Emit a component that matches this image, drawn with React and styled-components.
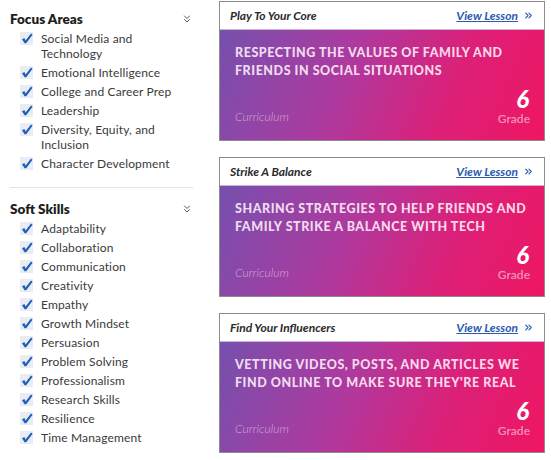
import React from "react";
import styled, { createGlobalStyle } from "styled-components";
import { ChevronsDown, ChevronsRight } from "lucide-react";

const GlobalStyle = createGlobalStyle`
  body {
    margin: 0;
    background: #ffffff;
    font-family: Lato, "Open Sans", sans-serif;
  }
`;

const Page = styled.div`
  display: flex;
  width: 551px;
  height: 460px;
  overflow: hidden;
`;

/* sidebar with filter groups */
const Sidebar = styled.aside`
  width: 183px;
  padding: 10px 0 0 10px;
  flex-shrink: 0;
`;

const Group = styled.section`
  padding-bottom: ${(p) => (p.divided ? "12px" : "0")};
  margin-bottom: ${(p) => (p.divided ? "12px" : "0")};
  border-bottom: ${(p) => (p.divided ? "1px solid #e3e3e3" : "none")};
`;

const GroupHead = styled.div`
  display: flex;
  justify-content: space-between;
  align-items: center;
  height: 18px;
  margin-bottom: 3px;
  color: #555;
`;

const GroupTitle = styled.h3`
  margin: 0;
  font-size: 13.5px;
  font-weight: 800;
  color: #1f1f1f;
`;

const Items = styled.ul`
  list-style: none;
  margin: 0;
  padding: 0 0 0 10px;
`;

const Item = styled.li`
  display: flex;
  align-items: flex-start;
  gap: 8px;
  font-size: 12px;
  line-height: 15px;
  color: #3a3a3a;
  margin-bottom: 4px;
  letter-spacing: 0.15px;
`;

const Box = styled.span`
  width: 13px;
  height: 13px;
  margin-top: 1px;
  flex-shrink: 0;
  background: #e9edf3;
  display: flex;
  align-items: center;
  justify-content: center;
`;

const Label = styled.span`
  max-width: 138px;
`;

/* lesson cards */
const Cards = styled.main`
  display: flex;
  flex-direction: column;
  gap: 16px;
  padding: 1px 0 0 26px;
`;

const Card = styled.article`
  width: 324px;
  height: 138px;
  border: 1px solid #8c8c8c;
  display: flex;
  flex-direction: column;
`;

const CardHead = styled.header`
  height: 27px;
  flex-shrink: 0;
  display: flex;
  align-items: center;
  justify-content: space-between;
  padding: 0 10px;
  border-bottom: 1px solid #c9b4d6;
  font-style: italic;
  font-size: 12px;
  font-weight: 700;
`;

const CardName = styled.span`
  color: #2a2a2a;
`;

const ViewLink = styled.a`
  display: flex;
  align-items: center;
  gap: 5px;
  color: #2a5aae;
  text-decoration: none;
  span {
    text-decoration: underline;
  }
`;

const CardBody = styled.div`
  flex: 1;
  display: flex;
  flex-direction: column;
  justify-content: space-between;
  padding: 14px 14px 14px 15px;
  background: linear-gradient(112deg, #7650ae 0%, #ad3a9f 38%, #dc2078 70%, #ef1662 100%);
`;

const Topic = styled.h2`
  margin: 0;
  padding-right: 0;
  margin-right: -6px;
  font-size: 12.5px;
  line-height: 18px;
  font-weight: 900;
  letter-spacing: 0.55px;
  text-transform: uppercase;
  color: rgba(255, 240, 250, 0.9);
`;

const CardFoot = styled.div`
  display: flex;
  justify-content: space-between;
  align-items: flex-end;
`;

const Curriculum = styled.span`
  font-size: 12px;
  line-height: 14px;
  font-style: italic;
  font-weight: 300;
  color: rgba(255, 230, 245, 0.6);
  margin-bottom: 2px;
`;

const GradeBox = styled.div`
  display: flex;
  flex-direction: column;
  align-items: flex-end;
`;

const GradeNum = styled.span`
  font-size: 24px;
  line-height: 26px;
  font-weight: 900;
  font-style: italic;
  color: #ffffff;
  margin-right: 1px;
`;

const GradeLabel = styled.span`
  font-size: 12px;
  line-height: 14px;
  font-weight: 600;
  color: rgba(255, 225, 240, 0.6);
`;

const Check = () => (
  <svg width="12" height="11" viewBox="0 0 12 11">
    <path d="M1 6.2 L3.4 5 L4.6 7.4 L10 0.6 L11.6 1.8 L5.2 10.2 L3.6 10.2 Z" fill="#1f5fb8" />
  </svg>
);

const focusAreas = [
  "Social Media and Technology",
  "Emotional Intelligence",
  "College and Career Prep",
  "Leadership",
  "Diversity, Equity, and Inclusion",
  "Character Development",
];

const softSkills = [
  "Adaptability",
  "Collaboration",
  "Communication",
  "Creativity",
  "Empathy",
  "Growth Mindset",
  "Persuasion",
  "Problem Solving",
  "Professionalism",
  "Research Skills",
  "Resilience",
  "Time Management",
];

const lessons = [
  { name: "Play To Your Core", topic: "Respecting the values of family and friends in social situations" },
  { name: "Strike A Balance", topic: "Sharing strategies to help friends and family strike a balance with tech" },
  { name: "Find Your Influencers", topic: "Vetting videos, posts, and articles we find online to make sure they're real" },
];

const FilterGroup = ({ title, items, divided }) => (
  <Group divided={divided}>
    <GroupHead>
      <GroupTitle>{title}</GroupTitle>
      <ChevronsDown size={12} strokeWidth={2} />
    </GroupHead>
    <Items>
      {items.map((it) => (
        <Item key={it}>
          <Box>
            <Check />
          </Box>
          <Label>{it}</Label>
        </Item>
      ))}
    </Items>
  </Group>
);

const App = () => (
  <>
    <GlobalStyle />
    <Page>
      <Sidebar>
        <FilterGroup title="Focus Areas" items={focusAreas} divided />
        <FilterGroup title="Soft Skills" items={softSkills} />
      </Sidebar>
      <Cards>
        {lessons.map((l) => (
          <Card key={l.name}>
            <CardHead>
              <CardName>{l.name}</CardName>
              <ViewLink href="#">
                <span>View Lesson</span>
                <ChevronsRight size={11} strokeWidth={2.5} />
              </ViewLink>
            </CardHead>
            <CardBody>
              <Topic>{l.topic}</Topic>
              <CardFoot>
                <Curriculum>Curriculum</Curriculum>
                <GradeBox>
                  <GradeNum>6</GradeNum>
                  <GradeLabel>Grade</GradeLabel>
                </GradeBox>
              </CardFoot>
            </CardBody>
          </Card>
        ))}
      </Cards>
    </Page>
  </>
);

export default App;
